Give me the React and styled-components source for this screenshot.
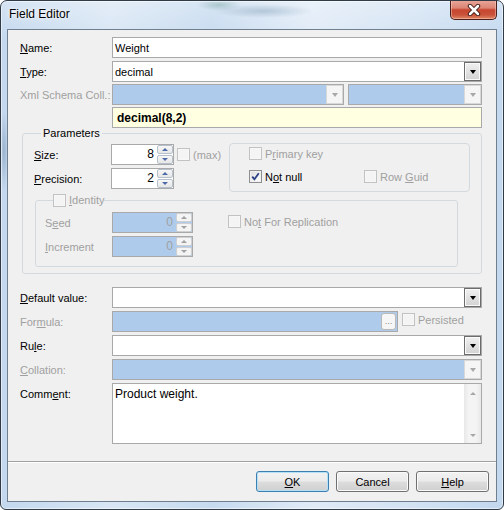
import React from 'react';
import styled, { createGlobalStyle } from 'styled-components';

const GlobalStyle = createGlobalStyle`
  html, body {
    margin: 0;
    padding: 0;
    background: #ffffff;
  }
  body {
    font-family: "Liberation Sans", Arial, sans-serif;
    font-size: 11px;
    color: #000;
  }
`;

const colors = {
  face: '#f0f0f0',
  field: '#a9a9a9',
  muted: '#a0a0a0',
  disabledField: '#aecbeb',
  info: '#ffffe1',
  group: '#d3dadf',
};

const Window = styled.div`
  box-sizing: border-box;
  width: 504px;
  height: 510px;
  display: flex;
  flex-direction: column;
  padding: 0 6px 7px 6px;
  border: 1px solid #2f3b47;
  border-radius: 7px 7px 6px 6px;
  box-shadow: inset 0 0 0 1px rgba(255, 255, 255, 0.55);
  overflow: hidden;
  background:
    radial-gradient(ellipse 50px 7px at 262px 10px, rgba(70, 110, 145, 0.28), rgba(70, 110, 145, 0)),
    radial-gradient(ellipse 22px 6px at 218px 4px, rgba(40, 110, 90, 0.25), rgba(40, 110, 90, 0)),
    radial-gradient(ellipse 4px 40px at 3px 150px, rgba(60, 90, 130, 0.3), rgba(60, 90, 130, 0)),
    linear-gradient(to bottom, rgba(255, 255, 255, 0.3), rgba(255, 255, 255, 0) 40px),
    linear-gradient(to right, #c3d8ee 0%, #d8e6f4 22%, #c6daef 42%, #e0ebf7 62%, #d2e2f3 82%, #c2d8ef 100%);
`;

const TitleBar = styled.div`
  flex: none;
  height: 28px;
  display: flex;
  justify-content: space-between;
  align-items: flex-start;
`;

const Caption = styled.div`
  padding: 6px 0 0 2px;
  font-size: 12px;
  line-height: 14px;
  text-shadow: 0 0 6px #fff, 0 0 3px #fff;
`;

const CloseButton = styled.div`
  box-sizing: border-box;
  width: 47px;
  height: 20px;
  margin-top: -1px;
  display: flex;
  align-items: center;
  justify-content: center;
  border: 1px solid #4a1e19;
  border-top: none;
  border-radius: 0 0 5px 5px;
  background: linear-gradient(to bottom, #e9a99b 0%, #dc8574 42%, #c8462f 52%, #c9533a 78%, #e18766 100%);
  box-shadow: inset 0 0 0 1px rgba(255, 215, 205, 0.45);
`;

const Client = styled.div`
  flex: 1;
  min-height: 0;
  display: flex;
  flex-direction: column;
  border: 1px solid #6f7f8f;
  background: ${colors.face};
`;

const Main = styled.div`
  flex: 1;
  padding: 7px 14px 0 12px;
`;

const FieldRow = styled.div`
  display: grid;
  grid-template-columns: 92px 1fr;
  align-items: ${(p) => (p.$top ? 'start' : 'center')};
  margin-top: ${(p) => p.$gap || 0}px;
`;

const FieldLabel = styled.div`
  color: ${(p) => (p.$disabled ? colors.muted : '#000')};
  padding-top: ${(p) => p.$pt || 0}px;
  white-space: nowrap;
`;

const Key = styled.span`
  text-decoration: underline;
  text-underline-offset: 1px;
`;

const TextBox = styled.div`
  box-sizing: border-box;
  height: ${(p) => p.$h || 21}px;
  width: ${(p) => (p.$w ? `${p.$w}px` : 'auto')};
  flex: ${(p) => (p.$w ? 'none' : '1')};
  display: flex;
  align-items: center;
  border: 1px solid ${colors.field};
  background: ${(p) => (p.$disabled ? colors.disabledField : p.$info ? colors.info : '#fff')};
  font-weight: ${(p) => (p.$info ? 'bold' : 'normal')};
  font-size: ${(p) => (p.$info ? 12 : 11)}px;
  padding-left: ${(p) => (p.$info ? 4 : 2)}px;
`;

const BoxText = styled.span`
  flex: 1;
  white-space: nowrap;
`;

const DropButton = styled.div`
  box-sizing: border-box;
  width: 17px;
  height: 19px;
  display: flex;
  align-items: center;
  justify-content: center;
  border: 1px solid ${(p) => (p.$disabled ? '#d8d8d8' : '#6c6c6c')};
  background: ${(p) =>
    p.$disabled ? '#f5f5f5' : 'linear-gradient(to bottom, #f0f0f0 0%, #e2e2e2 50%, #d2d2d2 100%)'};
  box-shadow: ${(p) => (p.$disabled ? 'none' : 'inset 0 0 0 1px #fafafa')};
`;

const Arrow = styled.span`
  width: 0;
  height: 0;
  border-left: ${(p) => p.$w}px solid transparent;
  border-right: ${(p) => p.$w}px solid transparent;
  ${(p) => (p.$up ? 'border-bottom' : 'border-top')}: ${(p) => p.$h}px solid ${(p) => p.$color};
`;

const Pair = styled.div`
  display: grid;
  grid-template-columns: 1fr 134px;
  column-gap: 4px;
`;

const GroupBox = styled.fieldset`
  min-width: 0;
  margin: ${(p) => p.$mt}px ${(p) => p.$mr || 0}px 0 ${(p) => p.$ml}px;
  padding: ${(p) => p.$pad};
  border: 1px solid ${colors.group};
  border-radius: 3px;
`;

const GroupLegend = styled.legend`
  margin-left: ${(p) => p.$ml}px;
  padding: ${(p) => p.$pad || '0'};
  line-height: 13px;
  display: flex;
  align-items: center;
  gap: 3px;
  color: ${(p) => (p.$disabled ? colors.muted : '#000')};
`;

const ParamsTop = styled.div`
  display: flex;
  align-items: flex-start;
`;

const SpinGrid = styled.div`
  display: grid;
  grid-template-columns: ${(p) => p.$cols};
  row-gap: 3px;
  align-items: center;
`;

const SpinBox = styled.div`
  box-sizing: border-box;
  width: ${(p) => p.$w}px;
  height: 21px;
  display: flex;
  border: 1px solid ${colors.field};
  background: ${(p) => (p.$disabled ? colors.disabledField : '#fff')};
`;

const SpinValue = styled.div`
  flex: 1;
  text-align: right;
  padding-right: 3px;
  line-height: 19px;
  font-size: 12px;
  color: ${(p) => (p.$disabled ? colors.muted : '#000')};
`;

const SpinButtons = styled.div`
  width: 16px;
  display: flex;
  flex-direction: column;
  gap: 1px;
`;

const SpinButton = styled.div`
  box-sizing: border-box;
  flex: 1;
  display: flex;
  align-items: center;
  justify-content: center;
  border: 1px solid ${(p) => (p.$disabled ? '#d0d0d0' : '#b6c0cc')};
  border-radius: 2px;
  background: ${(p) =>
    p.$disabled ? '#f4f4f4' : 'linear-gradient(to bottom, #f7f7f7 0%, #e6e6e6 100%)'};
`;

const OptionsGroup = styled.div`
  box-sizing: border-box;
  width: 241px;
  height: 49px;
  margin: -1px 0 0 auto;
  padding: 3px 0 0 19px;
  display: grid;
  grid-template-columns: 115px auto;
  grid-template-rows: 13px 13px;
  row-gap: 10px;
  border: 1px solid ${colors.group};
  border-radius: 4px;
`;

const CheckLabel = styled.label`
  display: inline-flex;
  align-items: center;
  gap: 3px;
  height: 13px;
  white-space: nowrap;
  margin: ${(p) => p.$m || '0'};
  align-self: ${(p) => (p.$start ? 'flex-start' : 'auto')};
  color: ${(p) => (p.$disabled ? colors.muted : '#000')};
`;

const CheckBox = styled.span`
  box-sizing: border-box;
  flex: none;
  width: 13px;
  height: 13px;
  display: inline-flex;
  align-items: center;
  justify-content: center;
  border: 1px solid ${(p) => (p.$disabled ? '#c2c2c2' : '#8e8f8f')};
  background: ${(p) =>
    p.$disabled ? '#f4f4f4' : 'linear-gradient(135deg, #dadada 0%, #f4f4f4 60%, #ffffff 100%)'};
  box-shadow: inset 0 0 0 1px ${(p) => (p.$disabled ? '#f7f7f7' : '#f0f0f0')};
`;

const IdentityBody = styled.div`
  display: flex;
  align-items: flex-start;
`;

const EllipsisButton = styled.div`
  box-sizing: border-box;
  width: 15px;
  height: 17px;
  margin-right: 1px;
  display: flex;
  align-items: center;
  justify-content: center;
  border: 1px solid #b9b9b9;
  border-radius: 3px;
  background: #f6f6f6;
  color: #8a8a8a;
  font-size: 9px;
  line-height: 9px;
`;

const Memo = styled.div`
  box-sizing: border-box;
  height: 61px;
  display: flex;
  border: 1px solid ${colors.field};
  background: #fff;
`;

const MemoText = styled.div`
  flex: 1;
  padding: 3px 0 0 2px;
  font-size: 12px;
`;

const ScrollBar = styled.div`
  width: 17px;
  display: flex;
  flex-direction: column;
  justify-content: space-between;
  align-items: center;
  padding: 8px 0 6px;
  background: linear-gradient(to right, #e8e8e8 0%, #f4f4f4 30%, #f4f4f4 70%, #e8e8e8 100%);
`;

const Footer = styled.div`
  box-sizing: border-box;
  flex: none;
  height: 40px;
  display: flex;
  justify-content: flex-end;
  align-items: flex-start;
  gap: 7px;
  padding: 9px 7px 0 0;
  border-top: 1px solid #a0a0a0;
  box-shadow: inset 0 1px 0 #ffffff;
`;

const DialogButton = styled.button`
  box-sizing: border-box;
  width: 73px;
  height: 21px;
  padding: 0;
  font-family: "Liberation Sans", Arial, sans-serif;
  font-size: 11px;
  color: #000;
  border: 1px solid ${(p) => (p.$default ? '#3c7fb1' : '#707070')};
  border-radius: 3px;
  background: linear-gradient(to bottom, #f2f2f2 0%, #ebebeb 48%, #dddddd 52%, #cfcfcf 100%);
  box-shadow: inset 0 0 0 1px ${(p) => (p.$default ? '#b5e1f8' : '#fbfbfb')};
`;

const Check = ({ checked, disabled }) => (
  <CheckBox $disabled={disabled}>
    {checked && (
      <svg width="9" height="9" viewBox="0 0 9 9">
        <path d="M1.2 4.6 L3.4 7.2 L7.8 1.2" fill="none" stroke="#2c4485" strokeWidth="1.8" />
      </svg>
    )}
  </CheckBox>
);

const Option = ({ children, checked, disabled, m, start }) => (
  <CheckLabel $disabled={disabled} $m={m} $start={start}>
    <Check checked={checked} disabled={disabled} />
    <span>{children}</span>
  </CheckLabel>
);

const Combo = ({ value, disabled, w }) => (
  <TextBox $disabled={disabled} $w={w}>
    <BoxText>{value}</BoxText>
    <DropButton $disabled={disabled}>
      <Arrow $w={3.5} $h={4} $color={disabled ? '#a8a8a8' : '#000'} />
    </DropButton>
  </TextBox>
);

const Spin = ({ value, w, disabled }) => (
  <SpinBox $w={w} $disabled={disabled}>
    <SpinValue $disabled={disabled}>{value}</SpinValue>
    <SpinButtons>
      <SpinButton $disabled={disabled}>
        <Arrow $up $w={3} $h={3} $color={disabled ? '#a0a0a0' : '#4d6aa8'} />
      </SpinButton>
      <SpinButton $disabled={disabled}>
        <Arrow $w={3} $h={3} $color={disabled ? '#a0a0a0' : '#4d6aa8'} />
      </SpinButton>
    </SpinButtons>
  </SpinBox>
);

export default function App() {
  return (
    <>
      <GlobalStyle />
      <Window>
        <TitleBar>
          <Caption>Field Editor</Caption>
          <CloseButton>
            <svg width="14" height="12" viewBox="0 0 14 12">
              <path d="M3 2 L11 10 M11 2 L3 10" stroke="#3b1a16" strokeWidth="4.4" strokeLinecap="round" />
              <path d="M3 2 L11 10 M11 2 L3 10" stroke="#ffffff" strokeWidth="2.5" strokeLinecap="round" />
            </svg>
          </CloseButton>
        </TitleBar>
        <Client>
          <Main>
            <FieldRow>
              <FieldLabel><Key>N</Key>ame:</FieldLabel>
              <TextBox><BoxText>Weight</BoxText></TextBox>
            </FieldRow>
            <FieldRow $gap={3}>
              <FieldLabel><Key>T</Key>ype:</FieldLabel>
              <Combo value="decimal" />
            </FieldRow>
            <FieldRow $gap={2}>
              <FieldLabel $disabled>Xml Schema Coll.:</FieldLabel>
              <Pair>
                <Combo disabled />
                <Combo disabled />
              </Pair>
            </FieldRow>
            <FieldRow $gap={2}>
              <span />
              <TextBox $info><BoxText>decimal(8,2)</BoxText></TextBox>
            </FieldRow>

            <GroupBox $mt={-1} $ml={2} $pad="4px 11px 6px 11px">
              <GroupLegend $ml={7} $pad="0 2px">Parameters</GroupLegend>
              <ParamsTop>
                <SpinGrid $cols="77px 63px auto">
                  <FieldLabel><Key>S</Key>ize:</FieldLabel>
                  <Spin value="8" w={63} />
                  <Option disabled m="0 0 0 3px">(max)</Option>
                  <FieldLabel><Key>P</Key>recision:</FieldLabel>
                  <Spin value="2" w={63} />
                </SpinGrid>
                <OptionsGroup>
                  <Option disabled>P<Key>r</Key>imary key</Option>
                  <span />
                  <Option checked>N<Key>o</Key>t null</Option>
                  <Option disabled>Row <Key>G</Key>uid</Option>
                </OptionsGroup>
              </ParamsTop>

              <GroupBox $mt={2} $ml={1} $mr={12} $pad="5px 0 9px 9px">
                <GroupLegend $ml={8} $disabled>
                  <Check disabled />
                  <span><Key>I</Key>dentity</span>
                </GroupLegend>
                <IdentityBody>
                  <SpinGrid $cols="67px 81px">
                    <FieldLabel $disabled>S<Key>e</Key>ed</FieldLabel>
                    <Spin value="0" w={81} disabled />
                    <FieldLabel $disabled><Key>I</Key>ncrement</FieldLabel>
                    <Spin value="0" w={81} disabled />
                  </SpinGrid>
                  <Option disabled m="3px 0 0 35px">No<Key>t</Key> For Replication</Option>
                </IdentityBody>
              </GroupBox>
            </GroupBox>

            <FieldRow $gap={13}>
              <FieldLabel><Key>D</Key>efault value:</FieldLabel>
              <Combo />
            </FieldRow>
            <FieldRow $gap={3}>
              <FieldLabel $disabled>For<Key>m</Key>ula:</FieldLabel>
              <div style={{ display: 'flex' }}>
                <TextBox $disabled $w={286}>
                  <BoxText />
                  <EllipsisButton>...</EllipsisButton>
                </TextBox>
                <Option disabled start m="2px 0 0 4px">Persisted</Option>
              </div>
            </FieldRow>
            <FieldRow $gap={3}>
              <FieldLabel>Ru<Key>l</Key>e:</FieldLabel>
              <Combo />
            </FieldRow>
            <FieldRow $gap={3}>
              <FieldLabel $disabled><Key>C</Key>ollation:</FieldLabel>
              <Combo disabled />
            </FieldRow>
            <FieldRow $gap={3} $top>
              <FieldLabel $pt={5}>Comm<Key>e</Key>nt:</FieldLabel>
              <Memo>
                <MemoText>Product weight.</MemoText>
                <ScrollBar>
                  <Arrow $up $w={3.5} $h={3.5} $color="#a8a8a8" />
                  <Arrow $w={3.5} $h={3.5} $color="#a8a8a8" />
                </ScrollBar>
              </Memo>
            </FieldRow>
          </Main>
          <Footer>
            <DialogButton $default><Key>O</Key>K</DialogButton>
            <DialogButton>Cancel</DialogButton>
            <DialogButton><Key>H</Key>elp</DialogButton>
          </Footer>
        </Client>
      </Window>
    </>
  );
}
